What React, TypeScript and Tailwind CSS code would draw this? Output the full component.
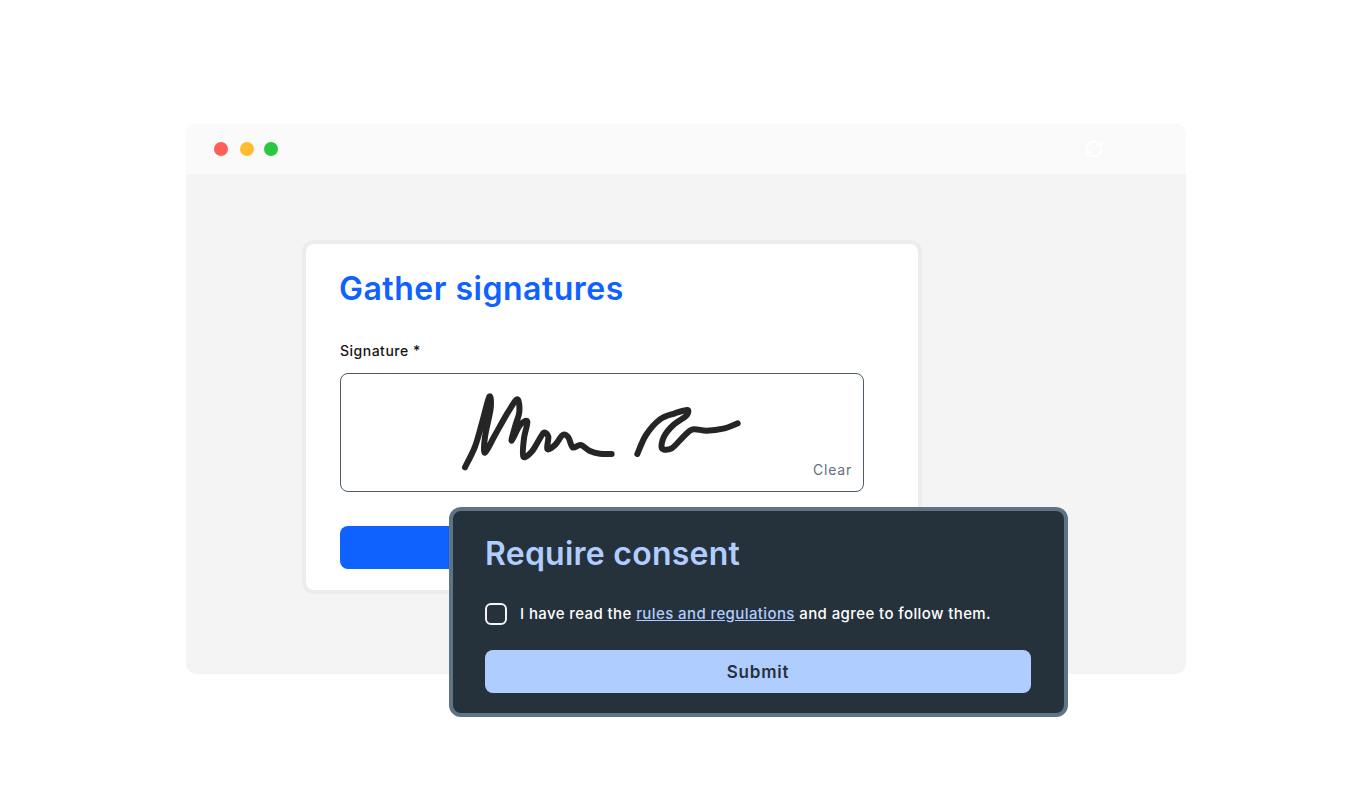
import { RefreshCw } from "lucide-react";

const font = "font-['Inter','Liberation_Sans',sans-serif]";

function smooth(points: number[][]) {
  let d = `M${points[0][0]} ${points[0][1]}`;
  for (let i = 0; i < points.length - 1; i++) {
    const p0 = points[Math.max(i - 1, 0)];
    const p1 = points[i];
    const p2 = points[i + 1];
    const p3 = points[Math.min(i + 2, points.length - 1)];
    const c1x = p1[0] + (p2[0] - p0[0]) / 6;
    const c1y = p1[1] + (p2[1] - p0[1]) / 6;
    const c2x = p2[0] - (p3[0] - p1[0]) / 6;
    const c2y = p2[1] - (p3[1] - p1[1]) / 6;
    d += `C${c1x} ${c1y} ${c2x} ${c2y} ${p2[0]} ${p2[1]}`;
  }
  return d;
}

const first = [
  [75, 262], [105, 200], [127, 125], [148, 50], [152, 85], [135, 170], [135, 218], [165, 165], [205, 95], [232, 58],
  [238, 95], [225, 140], [215, 182], [240, 135], [262, 125], [252, 175], [250, 230], [275, 215], [298, 178], [312, 158],
  [325, 170], [322, 207], [345, 195], [368, 165], [385, 172], [398, 202], [422, 195], [448, 212], [480, 221], [515, 222],
];
const second = [
  [592, 222], [618, 165], [660, 118], [705, 100], [742, 90], [738, 108], [700, 135], [672, 170], [666, 205], [695, 205],
  [730, 170], [758, 148], [800, 152], [850, 146], [893, 130],
];

function Signature() {
  return (
    <svg width="320" height="100" viewBox="0 0 960 300" fill="none" stroke="#252525" strokeWidth="18" strokeLinecap="round" strokeLinejoin="round">
      <path d={smooth(first)} />
      <path d={smooth(second)} />
    </svg>
  );
}

export default function App() {
  return (
    <div className={`min-h-screen bg-white pt-[124px] pl-[186px] ${font}`}>
      <div className="w-[1000px] h-[550px] rounded-[10px] bg-[#f4f4f4] relative">
        <div className="h-[50px] rounded-t-[10px] bg-[#fafafa] flex items-center pl-[28px] relative">
          <span className="w-[14px] h-[14px] rounded-full bg-[#ff5f57]" />
          <span className="w-[14px] h-[14px] rounded-full bg-[#febc2e] ml-[12px]" />
          <span className="w-[14px] h-[14px] rounded-full bg-[#28c840] ml-[10px]" />
          <RefreshCw className="absolute left-[898px] top-[15px] text-white" size={20} strokeWidth={2.5} />
        </div>
        <div className="pt-[66px] pl-[116px]">
          <div className="w-[620px] h-[354px] rounded-[12px] border-4 border-[#ececec] bg-white pl-[34px] relative">
            <h1 className="text-[32px] leading-[40px] font-semibold text-[#0f62fe] mt-[25px] -ml-px tracking-[0.5px]">Gather signatures</h1>
            <label className="block text-[14px] leading-[20px] font-[450] text-[#161616] mt-[32px] tracking-[0.5px]">Signature *</label>
            <div className="mt-[12px] w-[524px] h-[119px] rounded-lg border border-[#4d5b6b] relative">
              <div className="absolute left-[99px] top-[6px]"><Signature /></div>
              <span className="absolute right-[11px] bottom-[11px] text-[14px] leading-[20px] text-[#5f6f82] tracking-[0.8px]">Clear</span>
            </div>
            <div className="mt-[34px] w-[200px] h-[43px] rounded-lg bg-[#0f62fe]" />
          </div>
          <div className="absolute left-[263px] top-[383px] w-[619px] h-[210px] rounded-xl border-4 border-[#5c7485] bg-[#25323c] pl-[32px]">
            <h2 className="text-[32px] leading-[40px] font-semibold text-[#b0cdff] mt-[23px] tracking-[0.25px]">Require consent</h2>
            <div className="flex items-center mt-[28px] h-[24px]">
              <span className="w-[22px] h-[22px] rounded-[6px] border-2 border-[#f4f4f4]" />
              <p className="ml-[13px] text-[15px] leading-[22px] font-[450] text-white tracking-[0.4px]">
                I have read the <a className="text-[#b0cdff] underline">rules and regulations</a> and agree to follow them.
              </p>
            </div>
            <button className="mt-[24px] w-[546px] h-[43px] rounded-lg bg-[#b0cdff] text-[17px] font-semibold text-[#25323c] tracking-[0.8px] pt-[2px]">Submit</button>
          </div>
        </div>
      </div>
    </div>
  );
}
